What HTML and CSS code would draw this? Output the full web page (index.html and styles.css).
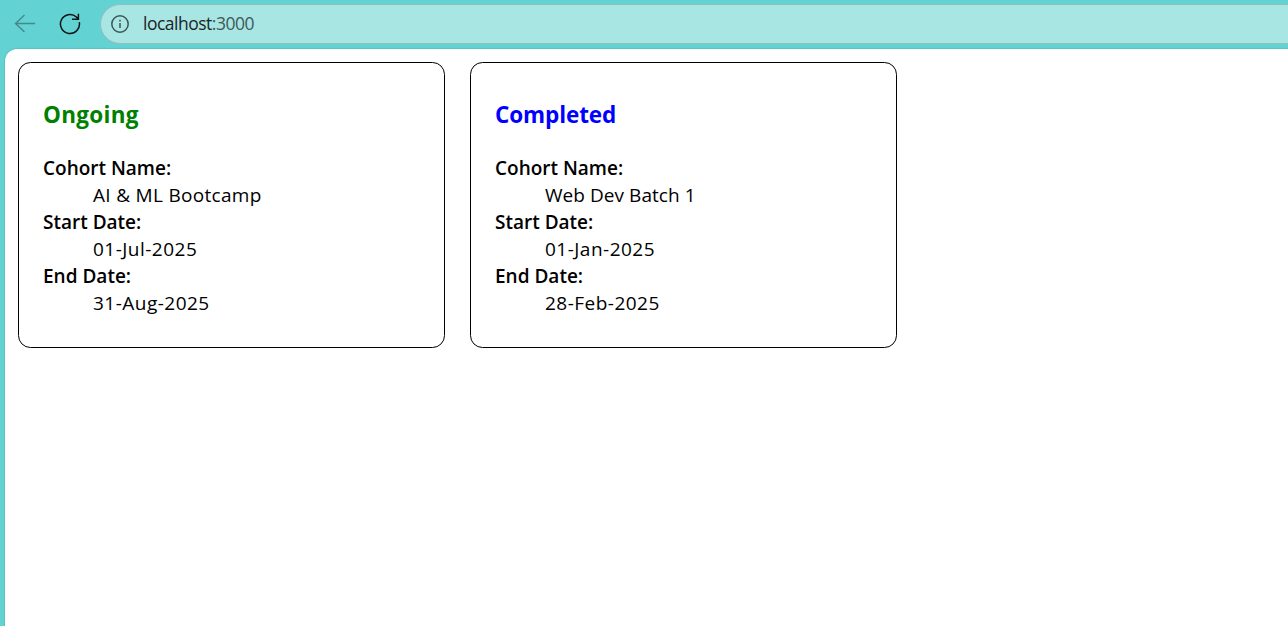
FILE: index.html
```html
<!DOCTYPE html>
<html lang="en">
<head>
<meta charset="utf-8">
<title>Cohorts</title>
<link rel="stylesheet" href="styles.css">
</head>
<body>
<header class="toolbar">
  <svg class="back" width="22" height="20" viewBox="0 0 22 20"><path d="M21 9.5H1.5M10.5 1L1.5 9.5L10.5 18"/></svg>
  <svg class="reload" width="22" height="22" viewBox="0 0 22 22"><path d="M20.3 9.2A9.5 9.5 0 1 1 17.4 4L19 5.6M19.4 0.8V6.2H13"/></svg>
  <div class="address">
    <svg class="info" width="18" height="18" viewBox="0 0 18 18"><circle cx="9" cy="9" r="8.2"/><path d="M9 8V13M9 4.8V6.4"/></svg>
    <span class="url">localhost<span class="port">:3000</span></span>
  </div>
</header>
<main class="page">
  <section class="card">
    <h3 class="status ongoing">Ongoing</h3>
    <dl class="details">
      <dt>Cohort Name:</dt><dd class="name name-wide">AI &amp; ML Bootcamp</dd>
      <dt>Start Date:</dt><dd>01-Jul-2025</dd>
      <dt>End Date:</dt><dd>31-Aug-2025</dd>
    </dl>
  </section>
  <section class="card">
    <h3 class="status completed">Completed</h3>
    <dl class="details">
      <dt>Cohort Name:</dt><dd class="name">Web Dev Batch 1</dd>
      <dt>Start Date:</dt><dd>01-Jan-2025</dd>
      <dt>End Date:</dt><dd>28-Feb-2025</dd>
    </dl>
  </section>
</main>
</body>
</html>
```

FILE: styles.css
```css
* { box-sizing: border-box; }
body {
  margin: 0;
  height: 626px;
  overflow: hidden;
  display: flex;
  flex-direction: column;
  background: #62d2d2;
  color: #000;
  font-family: "Open Sans", "Noto Sans", sans-serif;
}
.toolbar {
  height: 49px;
  flex: none;
  display: flex;
  align-items: center;
  padding: 0 0 1px 14px;
}
svg { flex: none; fill: none; }
.back { stroke: #45898b; stroke-width: 1.4; }
.reload { margin-left: 23px; stroke: #0b1515; stroke-width: 1.5; }
.address {
  flex: 1;
  height: 40px;
  margin-left: 19px;
  padding-left: 10px;
  display: flex;
  align-items: center;
  gap: 14px;
  border: 1px solid #8fbfbf;
  border-right: 0;
  border-radius: 20px 0 0 20px;
  background: #a8e6e4;
}
.info { stroke: #3d5555; stroke-width: 1.5; }
.url { font-size: 17.5px; line-height: 24px; padding-bottom: 2px; letter-spacing: -0.5px; color: #1b2525; }
.port { color: #3f5959; }
.page {
  flex: 1;
  margin-left: 5px;
  padding: 13px;
  display: flex;
  align-items: flex-start;
  gap: 25px;
  background: #fff;
  border-top-left-radius: 12px;
  box-shadow: 0 0 2px #3ea5a5;
}
.card {
  width: 427px;
  height: 286px;
  padding: 24px;
  border: 1px solid #000;
  border-radius: 12.5px;
}
.status { margin: 11px 0 24px; font-size: 22.5px; line-height: 33px; font-weight: 700; }
.ongoing { color: #008000; letter-spacing: 0.3px; }
.completed { color: #00f; letter-spacing: -0.1px; }
.details { margin: 0; font-size: 19px; line-height: 27px; }
dt { font-weight: 600; }
dd { margin: 0 0 0 50px; letter-spacing: 0.48px; }
.name { letter-spacing: 0.05px; }
.name-wide { letter-spacing: 0.3px; }
```
